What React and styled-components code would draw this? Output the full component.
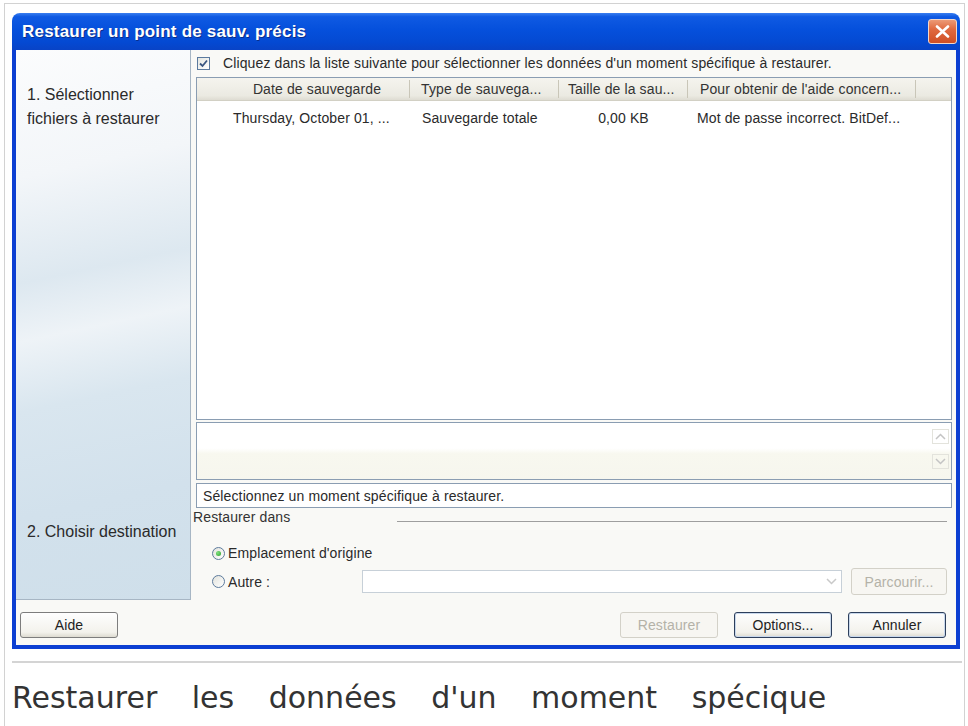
import React from 'react'
import styled, { createGlobalStyle } from 'styled-components'

const GlobalStyle = createGlobalStyle`
  html, body {
    margin: 0;
    padding: 0;
    background: #fff;
  }
  body {
    font-family: "Liberation Sans", Arial, sans-serif;
    color: #222;
  }
  * { box-sizing: border-box; }
`

const Frame = styled.div`
  margin: 3px 3px 0 4px;
  min-height: 723px;
  border: 1px solid #d2d2d2;
  border-bottom: none;
  padding: 9px 0 0 7px;
`

const Dialog = styled.div`
  width: 948px;
  height: 636px;
  display: flex;
  flex-direction: column;
`

const TitleBar = styled.div`
  height: 37px;
  flex: none;
  border-radius: 8px 8px 0 0;
  background: linear-gradient(#3a7ef0 0%, #0f5ae3 10%, #0550dc 45%, #0449d2 80%, #0843c6 100%);
  display: flex;
  align-items: center;
  justify-content: space-between;
  padding: 0 3px 0 10px;
`

const Title = styled.span`
  font-family: "Liberation Sans", Arial, sans-serif;
  font-weight: bold;
  font-size: 17px;
  color: #fff;
  text-shadow: 1px 1px 0 #0a2e8c;
  letter-spacing: 0.2px;
`

const CloseButton = styled.div`
  width: 29px;
  height: 25px;
  border-radius: 3px;
  border: 1px solid #f3d7c9;
  background: linear-gradient(#ec9a76 0%, #e06a40 40%, #cf4f25 100%);
  display: flex;
  align-items: center;
  justify-content: center;
`

const Body = styled.div`
  flex: 1;
  border: 4px solid #0c3fd2;
  border-top: none;
  background: #f9f9f6;
  display: grid;
  grid-template-columns: 175px 1fr;
  grid-template-rows: 550px 1fr;
  font-size: 14px;
  letter-spacing: 0.12px;
`

const StepPanel = styled.div`
  border-right: 1px solid #a7b6c4;
  border-bottom: 1px solid #a7b6c4;
  background: linear-gradient(168deg, #fbfcfd 0%, #f3f6f9 22%, #dde8f0 40%, #eef3f7 50%, #d9e6ef 62%, #d2e1ec 80%, #cfdfea 100%);
  padding: 33px 0 0 11px;
  display: flex;
  flex-direction: column;
  letter-spacing: 0;
`

const Step = styled.div`
  font-size: 16px;
  line-height: 24px;
  color: #2a2a2a;
  margin-top: ${p => p.$offset || 0}px;
`

const MainPanel = styled.div`
  padding: 0 4px 0 5px;
  display: flex;
  flex-direction: column;
`

const CheckRow = styled.div`
  height: 26px;
  display: flex;
  align-items: center;
  gap: 13px;
  padding-left: 1px;
  color: #2a2a2a;
`

const CheckBox = styled.div`
  width: 13px;
  height: 13px;
  border: 1px solid #5b7a9e;
  background: linear-gradient(135deg, #e4e6e0, #fff);
  display: flex;
  align-items: center;
  justify-content: center;
`

const ListView = styled.div`
  margin-top: 1px;
  height: 343px;
  border: 1px solid #8a9db2;
  background: #fff;
`

const Columns = styled.div`
  display: grid;
  grid-template-columns: 213px 149px 129px 228px 1fr;
`

const HeaderRow = styled(Columns)`
  height: 23px;
  background: linear-gradient(#f5f4ee, #ebeae2 80%, #dedcd2);
  border-bottom: 1px solid #d2d0c4;
`

const HeaderCell = styled.div`
  display: flex;
  align-items: center;
  justify-content: ${p => (p.$center ? 'center' : 'flex-start')};
  padding-left: ${p => p.$pad || 0}px;
  white-space: nowrap;
  overflow: hidden;
  border-right: ${p => (p.$last ? 'none' : '1px solid #c9c6b8')};
  margin: 2px 0;
  color: #333;
`

const DataRow = styled(Columns)`
  height: 20px;
  margin-top: 7px;
`

const DataCell = styled.div`
  display: flex;
  align-items: center;
  justify-content: ${p => (p.$center ? 'center' : 'flex-start')};
  padding-left: ${p => p.$pad || 0}px;
  white-space: nowrap;
  overflow: hidden;
  color: #2a2a2a;
`

const DescBox = styled.div`
  margin-top: 2px;
  height: 58px;
  border: 1px solid #8a9db2;
  background: linear-gradient(#fff 0%, #fff 45%, #f8f8ef 55%, #f6f6ee 100%);
  display: flex;
  justify-content: flex-end;
  padding: 6px 2px 0 0;
`

const ScrollTrack = styled.div`
  width: 17px;
  display: flex;
  flex-direction: column;
  gap: 10px;
`

const ScrollArrow = styled.div`
  height: 15px;
  border: 1px solid #e3e3dc;
  display: flex;
  align-items: center;
  justify-content: center;
`

const StatusBox = styled.div`
  margin-top: 3px;
  height: 25px;
  border: 1px solid #8a9db2;
  background: #fff;
  display: flex;
  align-items: center;
  padding-left: 6px;
  color: #2a2a2a;
`

const GroupRow = styled.div`
  height: 18px;
  margin-left: -3px;
  display: flex;
  align-items: center;
  color: #333;
`

const GroupLine = styled.div`
  margin-left: auto;
  margin-right: 5px;
  margin-top: 9px;
  width: 550px;
  border-top: 1px solid #9e9e9e;
`

const RadioRow = styled.div`
  display: flex;
  align-items: center;
  padding-left: 16px;
  height: ${p => p.$h}px;
  margin-top: ${p => p.$mt}px;
`

const RadioLabel = styled.label`
  display: flex;
  align-items: center;
  gap: 3px;
  width: ${p => (p.$w ? `${p.$w}px` : 'auto')};
  color: #2a2a2a;
`

const RadioDot = styled.span`
  width: 13px;
  height: 13px;
  border-radius: 50%;
  border: 1px solid #5d7b9d;
  background: linear-gradient(135deg, #e2e3dc, #fff);
  display: flex;
  align-items: center;
  justify-content: center;

  &::after {
    content: '';
    width: 5px;
    height: 5px;
    border-radius: 50%;
    background: ${p => (p.$on ? 'radial-gradient(circle at 35% 35%, #7fe07f, #2ca02c)' : 'transparent')};
  }
`

const Combo = styled.div`
  width: 480px;
  height: 23px;
  border: 1px solid #c7d0d8;
  background: #fff;
  display: flex;
  justify-content: flex-end;
  align-items: center;
  padding-right: 4px;
`

const Button = styled.div`
  width: ${p => p.$w || 98}px;
  height: ${p => p.$h || 26}px;
  border-radius: 3px;
  border: 1px solid ${p => (p.$disabled ? '#d3d1c8' : p.$strong ? '#2d3f5c' : '#7d7d7d')};
  background: ${p => (p.$disabled ? '#f7f6f2' : 'linear-gradient(#fefefe, #f3f2ec 80%, #dddbd1)')};
  box-shadow: ${p => (p.$strong ? 'inset 0 0 0 1px #c8d8ec' : 'none')};
  color: ${p => (p.$disabled ? '#b4b2a8' : '#222')};
  display: flex;
  align-items: center;
  justify-content: center;
  margin-left: ${p => p.$ml || 0}px;
`

const Footer = styled.div`
  grid-column: 1 / -1;
  display: flex;
  align-items: center;
  gap: 16px;
  padding: 4px 10px 0 4px;
`

const Spacer = styled.div`
  flex: 1;
`

const Separator = styled.div`
  margin-top: 12px;
  width: 950px;
  height: 2px;
  background: #d4d4d4;
`

const Caption = styled.p`
  margin: 17px 0 0;
  font-family: "DejaVu Sans", "Liberation Sans", sans-serif;
  font-size: 30px;
  line-height: 1.2;
  color: #333;
  word-spacing: 25px;
`

const Chevron = ({ up, color = '#c4c4c4' }) => (
  <svg width="11" height="7" viewBox="0 0 11 7">
    <path d={up ? 'M1 6 L5.5 1.5 L10 6' : 'M1 1 L5.5 5.5 L10 1'} fill="none" stroke={color} strokeWidth="1.5" />
  </svg>
)

const columns = [
  { head: 'Date de sauvegarde', center: true, pad: 28, cell: 'Thursday, October 01, ...', cellPad: 36 },
  { head: 'Type de sauvega...', pad: 11, cell: 'Sauvegarde totale', cellPad: 12 },
  { head: 'Taille de la sau...', pad: 9, cell: '0,00 KB', cellCenter: true },
  { head: "Pour obtenir de l'aide concern...", pad: 12, cell: 'Mot de passe incorrect. BitDef...', cellPad: 9 },
  { head: '', cell: '' },
]

export default function App() {
  return (
    <>
      <GlobalStyle />
      <Frame>
        <Dialog>
          <TitleBar>
            <Title>Restaurer un point de sauv. précis</Title>
            <CloseButton>
              <svg width="15" height="13" viewBox="0 0 15 13">
                <path d="M2 1.5 L13 11.5 M13 1.5 L2 11.5" stroke="#fff" strokeWidth="2.6" strokeLinecap="round" />
              </svg>
            </CloseButton>
          </TitleBar>
          <Body>
            <StepPanel>
              <Step>1. Sélectionner<br />fichiers à restaurer</Step>
              <Step $offset={389}>2. Choisir destination</Step>
            </StepPanel>
            <MainPanel>
              <CheckRow>
                <CheckBox>
                  <svg width="9" height="9" viewBox="0 0 9 9">
                    <path d="M1 4.5 L3.5 7 L8 1.5" fill="none" stroke="#3a5680" strokeWidth="1.8" />
                  </svg>
                </CheckBox>
                <span>Cliquez dans la liste suivante pour sélectionner les données d'un moment spécifique à restaurer.</span>
              </CheckRow>
              <ListView>
                <HeaderRow>
                  {columns.map((c, i) => (
                    <HeaderCell key={i} $center={c.center} $pad={c.pad} $last={i === columns.length - 1}>
                      {c.head}
                    </HeaderCell>
                  ))}
                </HeaderRow>
                <DataRow>
                  {columns.map((c, i) => (
                    <DataCell key={i} $center={c.cellCenter} $pad={c.cellPad}>
                      {c.cell}
                    </DataCell>
                  ))}
                </DataRow>
              </ListView>
              <DescBox>
                <ScrollTrack>
                  <ScrollArrow><Chevron up /></ScrollArrow>
                  <ScrollArrow><Chevron /></ScrollArrow>
                </ScrollTrack>
              </DescBox>
              <StatusBox>Sélectionnez un moment spécifique à restaurer.</StatusBox>
              <GroupRow>
                <span>Restaurer dans</span>
                <GroupLine />
              </GroupRow>
              <RadioRow $h={20} $mt={17}>
                <RadioLabel>
                  <RadioDot $on />
                  Emplacement d'origine
                </RadioLabel>
              </RadioRow>
              <RadioRow $h={27} $mt={5}>
                <RadioLabel $w={150}>
                  <RadioDot />
                  Autre :
                </RadioLabel>
                <Combo>
                  <Chevron color="#c9c9c9" />
                </Combo>
                <Button $disabled $w={96} $h={27} $ml={9}>Parcourir...</Button>
              </RadioRow>
            </MainPanel>
            <Footer>
              <Button>Aide</Button>
              <Spacer />
              <Button $disabled>Restaurer</Button>
              <Button $strong>Options...</Button>
              <Button $strong>Annuler</Button>
            </Footer>
          </Body>
        </Dialog>
        <Separator />
        <Caption>Restaurer les données d'un moment spécique</Caption>
      </Frame>
    </>
  )
}
